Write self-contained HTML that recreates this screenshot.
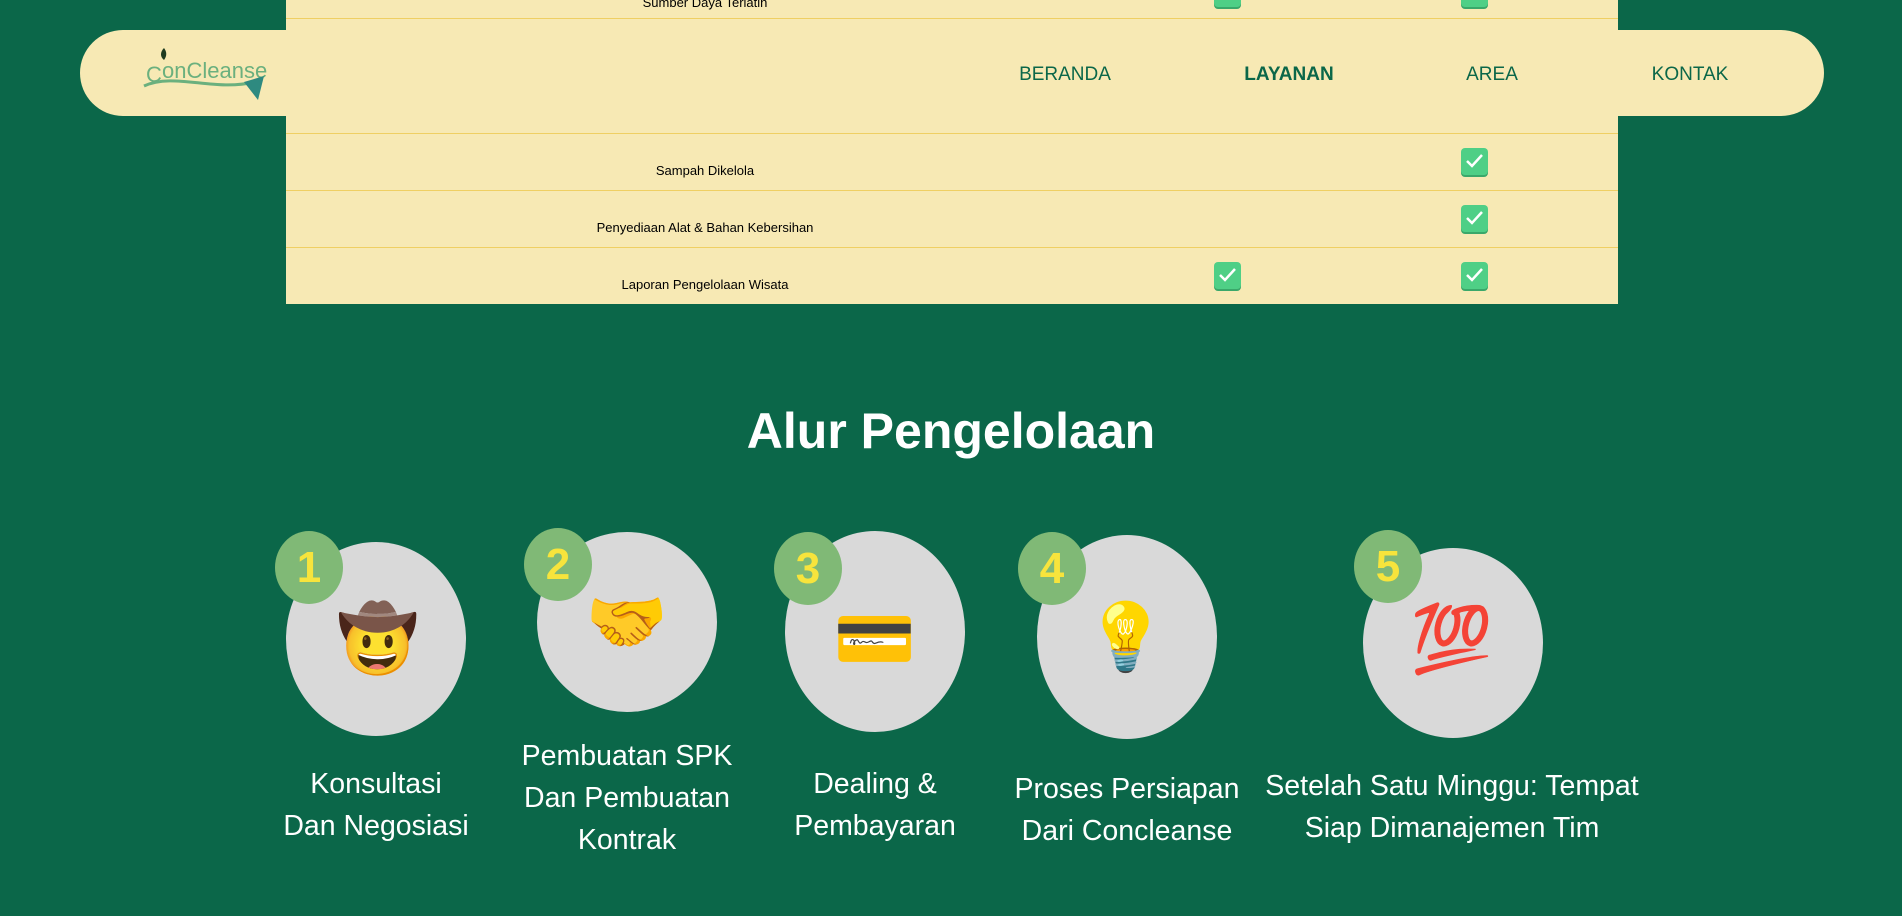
<!DOCTYPE html>
<html><head><meta charset="utf-8"><style>
*{margin:0;padding:0;box-sizing:border-box}
body{width:1902px;height:916px;background:#0b6749;position:relative;overflow:hidden;font-family:"Liberation Sans",sans-serif}
.table{position:absolute;left:286px;top:0;width:1332px;height:304px;background:#f7e9b4}
.line{position:absolute;left:0;width:100%;height:1px;background:#efcf63}
.rt{position:absolute;width:420px;left:209px;text-align:center;font-size:13px;color:#000}
.chk{position:absolute;width:27px;height:27px;background:#4fcf86;border-radius:4px;box-shadow:0 2px 0 #3aa86a}
.chk svg{position:absolute;left:4px;top:5px}
.hdr{position:absolute;left:80px;top:30px;width:1744px;height:86px;background:#f7e9b4;border-radius:43px}
.nav{position:absolute;top:64px;font-size:19px;color:#0b6749;transform:translateX(-50%)}
h2{position:absolute;left:0;width:1902px;top:402px;text-align:center;color:#fff;font-size:50px;font-weight:bold}
.c{position:absolute;background:#d9d9d9;border-radius:50%;width:180px}
.b{position:absolute;width:68px;height:73px;border-radius:50%;background:#80b976;color:#f7e43c;font-weight:bold;font-size:44px;text-align:center;line-height:73px}
.e{position:absolute;font-size:66px;transform:translate(-50%,-50%);font-family:"Noto Color Emoji",sans-serif}
.l{position:absolute;width:440px;transform:translateX(-50%);text-align:center;color:#fff;font-size:28.5px;line-height:42px}
</style></head><body>
<div class="table">
<div class="line" style="top:18px"></div>
<div class="line" style="top:133px"></div>
<div class="line" style="top:190px"></div>
<div class="line" style="top:247px"></div>
<div class="rt" style="top:-5px">Sumber Daya Terlatih</div>
<div class="chk" style="left:928px;top:-20px"></div><div class="chk" style="left:1175px;top:-20px"></div>
<div class="rt" style="top:163px">Sampah Dikelola</div>
<div class="rt" style="top:220px">Penyediaan Alat &amp; Bahan Kebersihan</div>
<div class="rt" style="top:277px">Laporan Pengelolaan Wisata</div>
<div class="chk" style="left:1175px;top:148px"><svg width="19" height="16"><path d="M2 8l5 5 10-11" stroke="#fff" stroke-width="2.5" fill="none"/></svg></div>
<div class="chk" style="left:1175px;top:205px"><svg width="19" height="16"><path d="M2 8l5 5 10-11" stroke="#fff" stroke-width="2.5" fill="none"/></svg></div>
<div class="chk" style="left:928px;top:262px"><svg width="19" height="16"><path d="M2 8l5 5 10-11" stroke="#fff" stroke-width="2.5" fill="none"/></svg></div>
<div class="chk" style="left:1175px;top:262px"><svg width="19" height="16"><path d="M2 8l5 5 10-11" stroke="#fff" stroke-width="2.5" fill="none"/></svg></div>
</div>
<div class="hdr"></div>
<svg style="position:absolute;left:140px;top:44px" width="130" height="58">
<path d="M24 4c-4 4-4 9 0 12c3-4 3-8 0-12z" fill="#1e3b1f"/>
<text x="6" y="38" font-family="Liberation Sans" font-size="22" fill="#6bb07e">C</text>
<text x="22" y="34" font-family="Liberation Sans" font-size="22" fill="#6bb07e">onCleanse</text>
<path d="M4 42c30-14 70 6 110-4" stroke="#6bb07e" stroke-width="3" fill="none"/>
<path d="M104 38l20-6-6 24z" fill="#2e8a80"/>
</svg>
<div class="nav" style="left:1065px">BERANDA</div>
<div class="nav" style="left:1289px;font-weight:bold">LAYANAN</div>
<div class="nav" style="left:1492px">AREA</div>
<div class="nav" style="left:1690px">KONTAK</div>
<h2>Alur Pengelolaan</h2>
<div class="c" style="left:286px;top:542px;height:194px"></div>
<div class="c" style="left:537px;top:532px;height:180px"></div>
<div class="c" style="left:785px;top:531px;height:201px"></div>
<div class="c" style="left:1037px;top:535px;height:204px"></div>
<div class="c" style="left:1363px;top:548px;height:190px"></div>
<div class="b" style="left:275px;top:531px">1</div>
<div class="b" style="left:524px;top:528px">2</div>
<div class="b" style="left:774px;top:532px">3</div>
<div class="b" style="left:1018px;top:532px">4</div>
<div class="b" style="left:1354px;top:530px">5</div>
<div class="e" style="left:378px;top:640px">🤠</div>
<div class="e" style="left:627px;top:623px">🤝</div>
<div class="e" style="left:875px;top:640px">💳</div>
<div class="e" style="left:1126px;top:638px">💡</div>
<div class="e" style="left:1452px;top:640px">💯</div>
<div class="l" style="left:376px;top:763px">Konsultasi<br>Dan Negosiasi</div>
<div class="l" style="left:627px;top:735px">Pembuatan SPK<br>Dan Pembuatan<br>Kontrak</div>
<div class="l" style="left:875px;top:763px">Dealing &amp;<br>Pembayaran</div>
<div class="l" style="left:1127px;top:768px">Proses Persiapan<br>Dari Concleanse</div>
<div class="l" style="left:1452px;top:765px">Setelah Satu Minggu: Tempat<br>Siap Dimanajemen Tim</div>
</body></html>
